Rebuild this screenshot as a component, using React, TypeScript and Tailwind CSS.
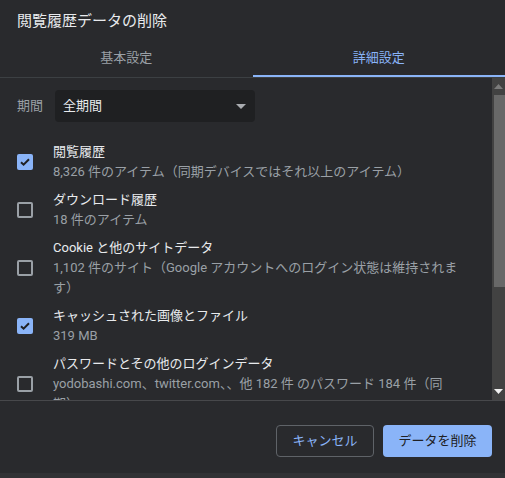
import type { ReactNode } from "react";

const FONT = "font-['Roboto','Noto_Sans_CJK_JP',sans-serif]";

type Item = {
  title: string;
  lines: string[];
  checked: boolean;
};

const items: Item[] = [
  {
    title: "閲覧履歴",
    lines: ["8,326 件のアイテム（同期デバイスではそれ以上のアイテム）"],
    checked: true,
  },
  { title: "ダウンロード履歴", lines: ["18 件のアイテム"], checked: false },
  {
    title: "Cookie と他のサイトデータ",
    lines: ["1,102 件のサイト（Google アカウントへのログイン状態は維持されます）"],
    checked: false,
  },
  { title: "キャッシュされた画像とファイル", lines: ["319 MB"], checked: true },
  {
    title: "パスワードとその他のログインデータ",
    lines: ["yodobashi.com、twitter.com、、他 182 件 のパスワード 184 件（同期）"],
    checked: false,
  },
];

function Checkbox({ checked }: { checked: boolean }) {
  if (checked) {
    return (
      <div className="flex size-[16px] shrink-0 items-center justify-center rounded-[2px] bg-[#8ab4f8]">
        <svg width="12" height="12" viewBox="0 0 12 12" fill="none">
          <path d="M2 6.2 4.6 8.7 10 3.3" stroke="#202124" strokeWidth="2" />
        </svg>
      </div>
    );
  }
  return <div className="size-[16px] shrink-0 rounded-[2px] border-2 border-[#9aa0a6]" />;
}

function Row({ item }: { item: Item }) {
  return (
    <div className="flex items-center py-1 pl-[17px]">
      <Checkbox checked={item.checked} />
      <div className="ml-[20px] w-[406px] text-[13px] leading-5">
        <p className="text-[#e8eaed]">{item.title}</p>
        {item.lines.map((l) => (
          <p key={l} className="text-[#9aa0a6]">
            {l}
          </p>
        ))}
      </div>
    </div>
  );
}

function Tab({ active, children }: { active?: boolean; children: ReactNode }) {
  return (
    <div
      className={`relative flex flex-1 items-center justify-center pb-[1px] text-[13px] ${
        active ? "text-[#8ab4f8]" : "text-[#9aa0a6]"
      }`}
    >
      {children}
      {active && <div className="absolute inset-x-0 bottom-0 h-[2px] bg-[#8ab4f8]" />}
    </div>
  );
}

function Scrollbar() {
  return (
    <div className="flex w-[13px] shrink-0 flex-col bg-[#424242]">
      <div className="flex h-[17px] items-center justify-center">
        <svg width="9" height="5" viewBox="0 0 9 5">
          <path d="M0 5 4.5 0 9 5Z" fill="#7b7b7b" />
        </svg>
      </div>
      <div className="ml-[2px] h-[192px] bg-[#686868]" />
      <div className="flex-1" />
      <div className="flex h-[17px] items-center justify-center">
        <svg width="9" height="5" viewBox="0 0 9 5">
          <path d="M0 0 4.5 5 9 0Z" fill="#f1f1f1" />
        </svg>
      </div>
    </div>
  );
}

export default function App() {
  return (
    <div className={`flex h-[478px] w-[505px] flex-col bg-[#292a2d] ${FONT}`}>
      <div className="h-[40px] pl-[17px] pt-[11px] text-[15px] leading-5 text-[#e8eaed]">
        閲覧履歴データの削除
      </div>

      <div className="flex h-[38px] border-b border-[#3c4043]">
        <Tab>基本設定</Tab>
        <Tab active>詳細設定</Tab>
      </div>

      <div className="flex h-[322px] overflow-hidden">
        <div className="flex-1 pt-[12px]">
          <div className="flex items-center">
            <span className="w-[55px] pl-[17px] text-[13px] text-[#9aa0a6]">期間</span>
            <div className="flex h-[32px] w-[200px] items-center justify-between rounded-[4px] bg-[#1f2022] pl-[8px] pr-[9px] text-[13px] text-[#e8eaed]">
              <span>全期間</span>
              <svg width="10" height="5" viewBox="0 0 10 5">
                <path d="M0 0 5 5 10 0Z" fill="#a9acb0" />
              </svg>
            </div>
          </div>
          <div className="mt-[16px]">
            {items.map((it) => (
              <Row key={it.title} item={it} />
            ))}
          </div>
        </div>
        <Scrollbar />
      </div>

      <div className="flex justify-end gap-[9px] border-t border-[#47484b] pb-[16px] pl-4 pr-[13px] pt-[24px] text-[13px]">
        <button className="h-[32px] w-[98px] rounded-[4px] border border-[#5f6368] text-[#8ab4f8]">
          キャンセル
        </button>
        <button className="h-[32px] w-[109px] rounded-[4px] bg-[#8ab4f8] text-[#202124]">
          データを削除
        </button>
      </div>
      <div className="flex-1 bg-[#313235]" />
    </div>
  );
}
